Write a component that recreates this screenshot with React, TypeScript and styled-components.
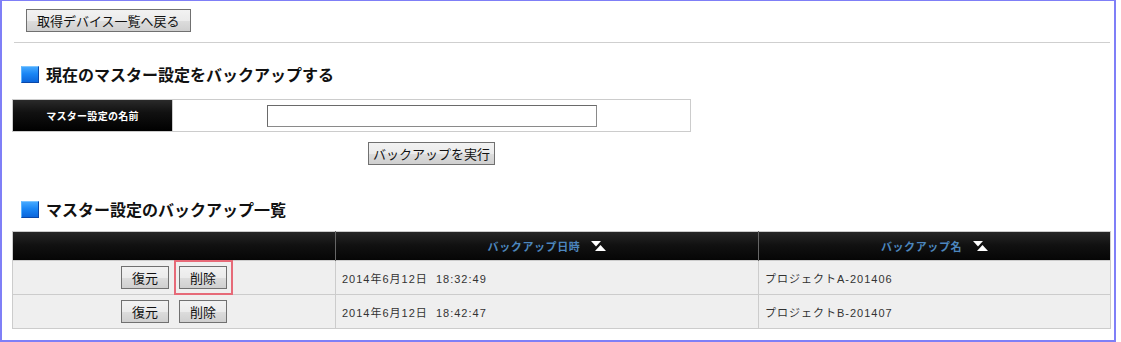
import React from "react";
import styled, { createGlobalStyle } from "styled-components";

const GlobalStyle = createGlobalStyle`
  html, body { margin: 0; padding: 0; background: #fff; }
  body { font-family: "Noto Sans CJK JP", "Liberation Sans", sans-serif; color: #000; }
`;

const Frame = styled.div`
  box-sizing: border-box;
  width: 1116px;
  height: 342px;
  border-style: solid;
  border-color: #7f7ff7;
  border-width: 1px 2px 2px 2px;
  padding: 8px 4px 0 10px;
  display: flex;
  flex-direction: column;
  align-items: flex-start;
`;

const Button = styled.button<{ $tight?: boolean }>`
  box-sizing: border-box;
  height: 23px;
  padding: 0 ${(p) => (p.$tight ? 4 : 10)}px;
  border: 1px solid #707070;
  border-radius: 0;
  background: linear-gradient(to bottom, #f2f2f2 0%, #ebebeb 50%, #dddddd 51%, #cfcfcf 100%);
  font-family: "Noto Sans CJK JP", sans-serif;
  font-size: 13px;
  line-height: 21px;
  color: #111;
  cursor: pointer;
  white-space: nowrap;
`;

const BackButton = styled(Button)`
  margin-left: 14px;
`;

const Rule = styled.hr`
  align-self: stretch;
  margin: 10px 0 0 2px;
  border: 0;
  border-top: 1px solid #cfcfcf;
  height: 0;
`;

const Heading = styled.h2<{ $top: number }>`
  display: flex;
  align-items: center;
  gap: 7px;
  margin: ${(p) => p.$top}px 0 0 9px;
  height: 18px;
  font-size: 16px;
  font-weight: bold;
  line-height: 18px;
  color: #111;
`;

const BlueMark = styled.span`
  box-sizing: border-box;
  width: 18px;
  height: 17px;
  background: linear-gradient(to bottom, #44a8ff 0%, #1a86f5 45%, #0b66dc 100%);
  border-right: 1px solid #0a47a8;
  border-bottom: 1px solid #0a47a8;
  border-top: 1px solid #7cc4ff;
  border-left: 1px solid #5ab4ff;
`;

const FormTable = styled.div`
  box-sizing: border-box;
  margin-top: 16px;
  width: 679px;
  height: 33px;
  border: 1px solid #cccccc;
  display: flex;
`;

const FormLabel = styled.div`
  width: 159px;
  display: flex;
  align-items: center;
  justify-content: center;
  background: linear-gradient(to bottom, #2a2a2a 0%, #111 40%, #000 100%);
  color: #fff;
  font-size: 10px;
  font-weight: bold;
  letter-spacing: 0.3px;
`;

const FormValue = styled.div`
  flex: 1;
  display: flex;
  align-items: center;
  justify-content: center;
  border-left: 1px solid #cccccc;
`;

const TextInput = styled.input`
  box-sizing: border-box;
  width: 330px;
  height: 22px;
  border: 1px solid #8a8a8a;
  border-top-color: #6a6a6a;
  border-left-color: #6a6a6a;
  background: #fff;
  padding: 0 3px;
  outline: none;
`;

const ExecRow = styled.div`
  box-sizing: border-box;
  width: 679px;
  padding-left: 160px;
  margin-top: 10px;
  display: flex;
  justify-content: center;
`;

const ListTable = styled.table`
  margin-top: 13px;
  width: 1099px;
  border-collapse: collapse;
  border: 1px solid #cccccc;
  table-layout: fixed;
`;

const HeadRow = styled.tr`
  background: linear-gradient(to bottom, #262626 0%, #111 45%, #050505 100%);
`;

const HeadCell = styled.th`
  height: 28px;
  padding: 0;
  border-left: 1px solid #666;
  color: #4c86be;
  font-size: 11px;
  font-weight: bold;
  letter-spacing: 0.6px;
  text-align: center;
  &:first-child { border-left: 0; }
`;

const HeadInner = styled.span`
  display: inline-flex;
  align-items: center;
  gap: 11px;
`;

const BodyRow = styled.tr`
  background: #efefef;
`;

const Cell = styled.td<{ $center?: boolean }>`
  height: 33px;
  padding: 0 0 0 ${(p) => (p.$center ? 0 : 6)}px;
  border: 1px solid #cccccc;
  font-family: "Liberation Sans", "Noto Sans CJK JP", sans-serif;
  font-size: 11px;
  letter-spacing: 1px;
  color: #333;
  text-align: ${(p) => (p.$center ? "center" : "left")};
  white-space: pre;
`;

const Actions = styled.div`
  display: flex;
  justify-content: center;
  gap: 10px;
`;

const Marked = styled.span`
  position: relative;
  display: inline-flex;
`;

const Highlight = styled.span`
  position: absolute;
  top: -6px;
  left: -5px;
  right: -6px;
  bottom: -6px;
  border: 2px solid #e66a78;
  pointer-events: none;
`;

const SortIcon = () => (
  <svg width="15" height="10" viewBox="0 0 15 10" aria-hidden="true">
    <polygon points="0,0 10,0 5,5.5" fill="#fff" />
    <polygon points="4,10 15,10 9.5,4" fill="#fff" />
  </svg>
);

const rows = [
  { date: "2014年6月12日  18:32:49", name: "プロジェクトA-201406", marked: true },
  { date: "2014年6月12日  18:42:47", name: "プロジェクトB-201407", marked: false },
];

export default function App() {
  return (
    <>
      <GlobalStyle />
      <Frame>
        <BackButton>取得デバイス一覧へ戻る</BackButton>
        <Rule />
        <Heading $top={22}>
          <BlueMark />
          現在のマスター設定をバックアップする
        </Heading>
        <FormTable>
          <FormLabel>マスター設定の名前</FormLabel>
          <FormValue>
            <TextInput type="text" />
          </FormValue>
        </FormTable>
        <ExecRow>
          <Button $tight>バックアップを実行</Button>
        </ExecRow>
        <Heading $top={35}>
          <BlueMark />
          マスター設定のバックアップ一覧
        </Heading>
        <ListTable>
          <colgroup>
            <col style={{ width: 323 }} />
            <col style={{ width: 423 }} />
            <col />
          </colgroup>
          <thead>
            <HeadRow>
              <HeadCell />
              <HeadCell>
                <HeadInner>
                  バックアップ日時
                  <SortIcon />
                </HeadInner>
              </HeadCell>
              <HeadCell>
                <HeadInner>
                  バックアップ名
                  <SortIcon />
                </HeadInner>
              </HeadCell>
            </HeadRow>
          </thead>
          <tbody>
            {rows.map((r) => (
              <BodyRow key={r.name}>
                <Cell $center>
                  <Actions>
                    <Button>復元</Button>
                    {r.marked ? (
                      <Marked>
                        <Button>削除</Button>
                        <Highlight />
                      </Marked>
                    ) : (
                      <Button>削除</Button>
                    )}
                  </Actions>
                </Cell>
                <Cell>{r.date}</Cell>
                <Cell>{r.name}</Cell>
              </BodyRow>
            ))}
          </tbody>
        </ListTable>
      </Frame>
    </>
  );
}
